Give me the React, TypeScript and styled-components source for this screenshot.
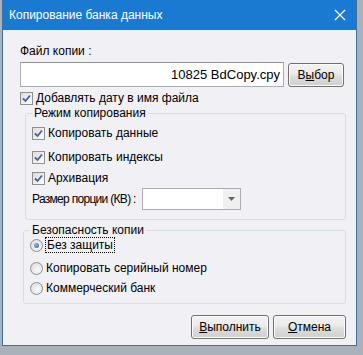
import styled, {createGlobalStyle} from 'styled-components';

const Global = createGlobalStyle`
  body {
    margin: 0;
    background: #a9b1ba;
    font-family: "Liberation Sans", Arial, sans-serif;
    font-size: 12px;
    color: #000;
  }
`;

const Window = styled.div`
  margin-left: 2px;
  width: 353px;
  height: 345px;
  border: 1px solid #3f6f9f;
  border-top: none;
  background: #f0f0f5;
  display: flex;
  flex-direction: column;
`;

const TitleBar = styled.div`
  height: 30px;
  background: #1a7ad2;
  color: #fff;
  display: flex;
  align-items: center;
  justify-content: space-between;
  padding: 0 10px 0 6px;
  font-size: 12px;
`;

const Body = styled.div`
  flex: 1;
  display: flex;
  flex-direction: column;
  padding: 14px 10px 0 17px;
`;

const Label = styled.div`
  height: 14px;
  line-height: 14px;
`;

const FileRow = styled.div`
  display: flex;
  align-items: center;
  gap: 4px;
  margin-top: 4px;
`;

const TextBox = styled.div`
  width: 264px;
  height: 25px;
  box-sizing: border-box;
  border: 1px solid #abadb3;
  border-top-color: #8e8f8f;
  background: #fff;
  display: flex;
  align-items: center;
  justify-content: flex-end;
  padding-right: 3px;
  font-size: 13px;
  overflow: hidden;
  white-space: nowrap;
`;

const Button = styled.button<{width: number}>`
  width: ${p => p.width}px;
  height: 24px;
  border: 1px solid #707070;
  border-radius: 3px;
  background: linear-gradient(#f2f2f2 0%, #ebebeb 45%, #dddddd 55%, #cfcfcf 100%);
  box-shadow: inset 0 0 0 1px #fcfcfc;
  font-family: inherit;
  font-size: 12px;
  color: #000;
  padding: 0;
  u { text-decoration: underline; }
`;

const CheckRow = styled.label<{top: number}>`
  display: flex;
  align-items: center;
  gap: 3px;
  height: 16px;
  margin-top: ${p => p.top}px;
`;

const Box = styled.span`
  width: 13px;
  height: 13px;
  box-sizing: border-box;
  border: 1px solid #8e8f8f;
  background: linear-gradient(135deg, #dcdcdc, #fdfdfd);
  display: flex;
  align-items: center;
  justify-content: center;
`;

const Radio = styled.span`
  width: 13px;
  height: 13px;
  box-sizing: border-box;
  border-radius: 50%;
  border: 1px solid #8e8f8f;
  background: radial-gradient(circle at 60% 60%, #fbfbfb, #d6d6d6);
  display: flex;
  align-items: center;
  justify-content: center;
`;

const Dot = styled.span`
  width: 5px;
  height: 5px;
  border-radius: 50%;
  background: radial-gradient(circle at 40% 40%, #9cc0e8, #1e4f8f);
`;

const Focus = styled.span`
  outline: 1px dotted #000;
  padding: 0 1px;
`;

const Group = styled.fieldset<{height: number; top: number; left: number}>`
  margin: ${p => p.top}px 0 0 ${p => p.left}px;
  padding: 0 0 0 6px;
  height: ${p => p.height}px;
  box-sizing: border-box;
  border: 1px solid #d5dfe5;
  border-radius: 3px;
  display: flex;
  flex-direction: column;
  legend {
    padding: 0 2px;
    margin-left: 0;
    line-height: 14px;
  }
`;

const SizeRow = styled.div`
  display: flex;
  align-items: center;
  gap: 6px;
  margin-top: 2px;
  span { letter-spacing: -0.7px; }
`;

const Combo = styled.div`
  width: 99px;
  height: 22px;
  box-sizing: border-box;
  border: 1px solid #abadb3;
  background: #fff;
  display: flex;
  justify-content: flex-end;
`;

const Arrow = styled.div`
  width: 17px;
  background: #f0f0f0;
  display: flex;
  align-items: center;
  justify-content: center;
`;

const Footer = styled.div`
  display: flex;
  justify-content: flex-end;
  gap: 4px;
  margin-top: 11px;
`;

function Check() {
  return (
    <Box>
      <svg width="9" height="9" viewBox="0 0 9 9">
        <path d="M1 4.5 L3.5 7 L8 1.5" fill="none" stroke="#4a5f97" strokeWidth="1.8" />
      </svg>
    </Box>
  );
}

export default function App() {
  return (
    <>
      <Global />
      <Window>
        <TitleBar>
          <span>Копирование банка данных</span>
          <svg width="12" height="12" viewBox="0 0 12 12">
            <path d="M1 1 L11 11 M11 1 L1 11" stroke="#fff" strokeWidth="1.2" />
          </svg>
        </TitleBar>
        <Body>
          <Label>Файл копии :</Label>
          <FileRow>
            <TextBox>10825 BdCopy.cpy</TextBox>
            <Button width={56}>В<u>ы</u>бор</Button>
          </FileRow>
          <CheckRow top={3}><Check />Добавлять дату в имя файла</CheckRow>
          <Group height={114} top={0} left={5}>
            <legend>Режим копирования</legend>
            <CheckRow top={5}><Check />Копировать данные</CheckRow>
            <CheckRow top={8}><Check />Копировать индексы</CheckRow>
            <CheckRow top={5}><Check />Архивация</CheckRow>
            <SizeRow>
              <span>Размер порции (КВ) :</span>
              <Combo>
                <Arrow>
                  <svg width="7" height="4" viewBox="0 0 7 4"><path d="M0 0 H7 L3.5 4 Z" fill="#666" /></svg>
                </Arrow>
              </Combo>
            </SizeRow>
          </Group>
          <Group height={81} top={3} left={3}>
            <legend>Безопасность копии</legend>
            <CheckRow top={0}><Radio><Dot /></Radio><Focus>Без защиты</Focus></CheckRow>
            <CheckRow top={7}><Radio />Копировать серийный номер</CheckRow>
            <CheckRow top={4}><Radio />Коммерческий банк</CheckRow>
          </Group>
          <Footer>
            <Button width={78}><u>В</u>ыполнить</Button>
            <Button width={73}><u>О</u>тмена</Button>
          </Footer>
        </Body>
      </Window>
    </>
  );
}
